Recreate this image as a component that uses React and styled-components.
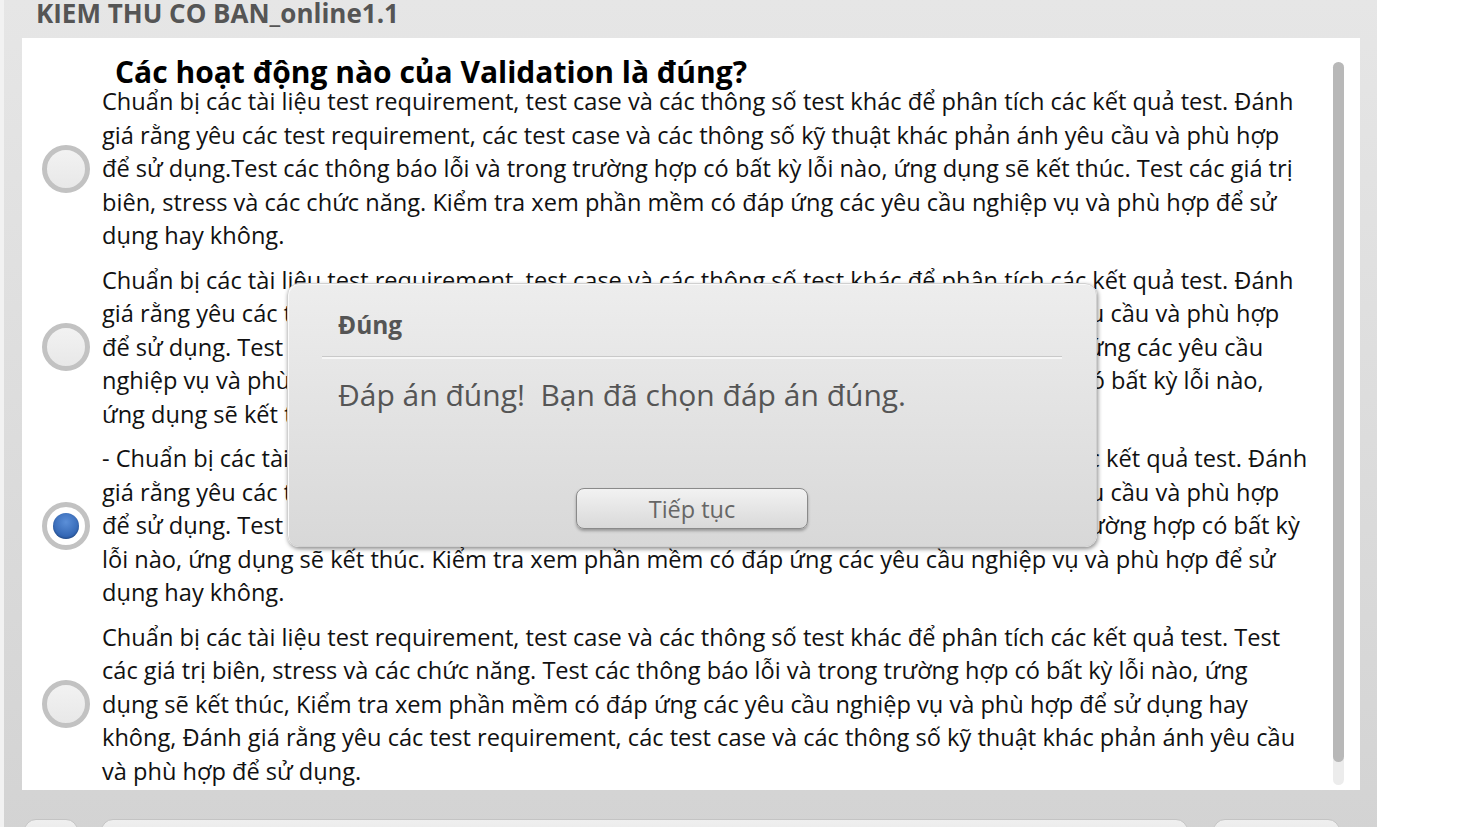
import React from 'react'
import styled, { createGlobalStyle } from 'styled-components'

const GlobalStyle = createGlobalStyle`
  html, body {
    margin: 0;
    padding: 0;
    background: #ffffff;
    overflow: hidden;
  }
  body {
    font-family: "Open Sans", "Liberation Sans", sans-serif;
  }
`

const Page = styled.div`
  width: 1462px;
  height: 827px;
  overflow: hidden;
  display: flex;
  background: #ffffff;
`

const LeftEdge = styled.div`
  width: 4px;
  background: #f2f2f2;
`

const Frame = styled.div`
  position: relative;
  width: 1373px;
  height: 880px;
  display: flex;
  flex-direction: column;
  background: linear-gradient(#e6e6e6, #d3d3d3 95%);
`

const Header = styled.div`
  height: 38px;
  padding: 0 32px;
  font-size: 26px;
  line-height: 26px;
  font-weight: 700;
  color: #555555;
`

const Panel = styled.div`
  margin: 0 17px 0 18px;
  height: 752px;
  background: #ffffff;
  display: flex;
`

const Content = styled.div`
  flex: 1;
  padding: 20px 25px 0 20px;
  display: flex;
  flex-direction: column;
`

const Question = styled.h1`
  margin: 0 0 0 73px;
  font-size: 30px;
  line-height: 27px;
  font-weight: 700;
  color: #000000;
`

const OptionList = styled.div`
  display: flex;
  flex-direction: column;
  gap: 11px;
`

const Option = styled.div`
  display: grid;
  grid-template-columns: 48px 1fr;
  column-gap: 12px;
  align-items: center;
`

const Radio = styled.span`
  width: 48px;
  height: 48px;
  border-radius: 50%;
  box-sizing: border-box;
  border: 5px solid #c2c2c2;
  background: ${p => (p.$checked ? '#ffffff' : 'linear-gradient(#f2f2f2, #e8e8e8)')};
  display: flex;
  align-items: center;
  justify-content: center;
`

const RadioDot = styled.span`
  width: 26px;
  height: 26px;
  border-radius: 50%;
  background: radial-gradient(circle at 50% 35%, #5b8fd8, #2f62b0 75%);
  box-shadow: inset 0 -1px 2px rgba(0, 0, 0, 0.25);
`

const OptionText = styled.div`
  font-size: 23.6px;
  line-height: 33.5px;
  color: #111111;
`

const ScrollTrack = styled.div`
  width: 11px;
  margin: 24px 16px 5px 0;
  border-radius: 6px;
  background: #ececec;
  display: flex;
  flex-direction: column;
`

const ScrollThumb = styled.div`
  height: 700px;
  border-radius: 6px;
  background: #b8b8b8;
`

const Footer = styled.div`
  display: flex;
  gap: 23px;
  padding: 29px 0 0 20px;
`

const FooterButton = styled.div`
  width: ${p => p.$w}px;
  height: 44px;
  box-sizing: border-box;
  border: 1px solid #c4c4c4;
  border-radius: 12px;
  background: linear-gradient(#efefef, #e2e2e2);
  margin-right: ${p => p.$mr || 0}px;
`

const Dialog = styled.div`
  position: absolute;
  left: 283px;
  top: 283px;
  width: 810px;
  height: 264px;
  box-sizing: border-box;
  border-radius: 12px;
  border: 1px solid #d0d0d0;
  background: linear-gradient(#ededed, #d8d8d8);
  box-shadow: 1px 2px 4px rgba(0, 0, 0, 0.45), inset 1px 1px 0 #fafafa;
  padding: 26px 34px 0 34px;
  display: flex;
  flex-direction: column;
`

const DialogTitle = styled.div`
  padding-left: 16px;
  font-size: 24.5px;
  line-height: 30px;
  font-weight: 700;
  color: #555555;
`

const Divider = styled.div`
  margin-top: 16px;
  height: 1px;
  background: #c9c9c9;
  border-bottom: 2px solid #f6f6f6;
`

const DialogBody = styled.div`
  padding-left: 16px;
  margin-top: 18px;
  font-size: 30px;
  line-height: 36px;
  color: #555555;
  white-space: pre;
`

const DialogActions = styled.div`
  margin-top: auto;
  margin-bottom: 17px;
  display: flex;
  justify-content: center;
`

const ContinueButton = styled.button`
  width: 232px;
  height: 41px;
  border-radius: 8px;
  border: 1.5px solid #8a8a8a;
  background: linear-gradient(#f2f2f2, #d9d9d9);
  box-shadow: 0 2px 3px rgba(0, 0, 0, 0.3);
  font-family: "Open Sans", "Liberation Sans", sans-serif;
  font-size: 23.5px;
  color: #666666;
  padding: 0;
`

const options = [
  {
    id: 1,
    text: 'Chuẩn bị các tài liệu test requirement, test case và các thông số test khác để phân tích các kết quả test. Đánh giá rằng yêu các test requirement, các test case và các thông số kỹ thuật khác phản ánh yêu cầu và phù hợp để sử dụng.Test các thông báo lỗi và trong trường hợp có bất kỳ lỗi nào, ứng dụng sẽ kết thúc. Test các giá trị biên, stress và các chức năng. Kiểm tra xem phần mềm có đáp ứng các yêu cầu nghiệp vụ và phù hợp để sử dụng hay không.'
  },
  {
    id: 2,
    text: 'Chuẩn bị các tài liệu test requirement, test case và các thông số test khác để phân tích các kết quả test. Đánh giá rằng yêu các test requirement, các test case và các thông số kỹ thuật khác phản ánh yêu cầu và phù hợp để sử dụng. Test các giá trị biên, stress và các chức năng. Kiểm tra xem phần mềm có đáp ứng các yêu cầu nghiệp vụ và phù hợp để sử dụng hay không.\u00A0 Test các thông báo lỗi và trong trường hợp có bất kỳ lỗi nào, ứng dụng sẽ kết thúc.'
  },
  {
    id: 3,
    checked: true,
    text: '- Chuẩn bị các tài liệu test requirement, test case và các thông số test khác để phân tích các kết quả test. Đánh giá rằng yêu các test requirement, các test case và các thông số kỹ thuật khác phản ánh yêu cầu và phù hợp để sử dụng. Test các giá trị biên, stress và các chức năng. Test các thông báo lỗi và trong trường hợp có bất kỳ lỗi nào, ứng dụng sẽ kết thúc. Kiểm tra xem phần mềm có đáp ứng các yêu cầu nghiệp vụ và phù hợp để sử dụng hay không.'
  },
  {
    id: 4,
    text: 'Chuẩn bị các tài liệu test requirement, test case và các thông số test khác để phân tích các kết quả test. Test các giá trị biên, stress và các chức năng. Test các thông báo lỗi và trong trường hợp có bất kỳ lỗi nào, ứng dụng sẽ kết thúc, Kiểm tra xem phần mềm có đáp ứng các yêu cầu nghiệp vụ và phù hợp để sử dụng hay không, Đánh giá rằng yêu các test requirement, các test case và các thông số kỹ thuật khác phản ánh yêu cầu và phù hợp để sử dụng.'
  }
]

export default function App() {
  return (
    <Page>
      <GlobalStyle />
      <LeftEdge />
      <Frame>
        <Header>KIEM THU CO BAN_online1.1</Header>
        <Panel>
          <Content>
            <Question>Các hoạt động nào của Validation là đúng?</Question>
            <OptionList>
              {options.map(o => (
                <Option key={o.id}>
                  <Radio $checked={o.checked}>{o.checked && <RadioDot />}</Radio>
                  <OptionText>{o.text}</OptionText>
                </Option>
              ))}
            </OptionList>
          </Content>
          <ScrollTrack>
            <ScrollThumb />
          </ScrollTrack>
        </Panel>
        <Footer>
          <FooterButton $w={54} />
          <FooterButton $w={1087} $mr={2} />
          <FooterButton $w={127} />
        </Footer>
        <Dialog>
          <DialogTitle>Đúng</DialogTitle>
          <Divider />
          <DialogBody>{'Đáp án đúng!  Bạn đã chọn đáp án đúng.'}</DialogBody>
          <DialogActions>
            <ContinueButton>Tiếp tục</ContinueButton>
          </DialogActions>
        </Dialog>
      </Frame>
    </Page>
  )
}
